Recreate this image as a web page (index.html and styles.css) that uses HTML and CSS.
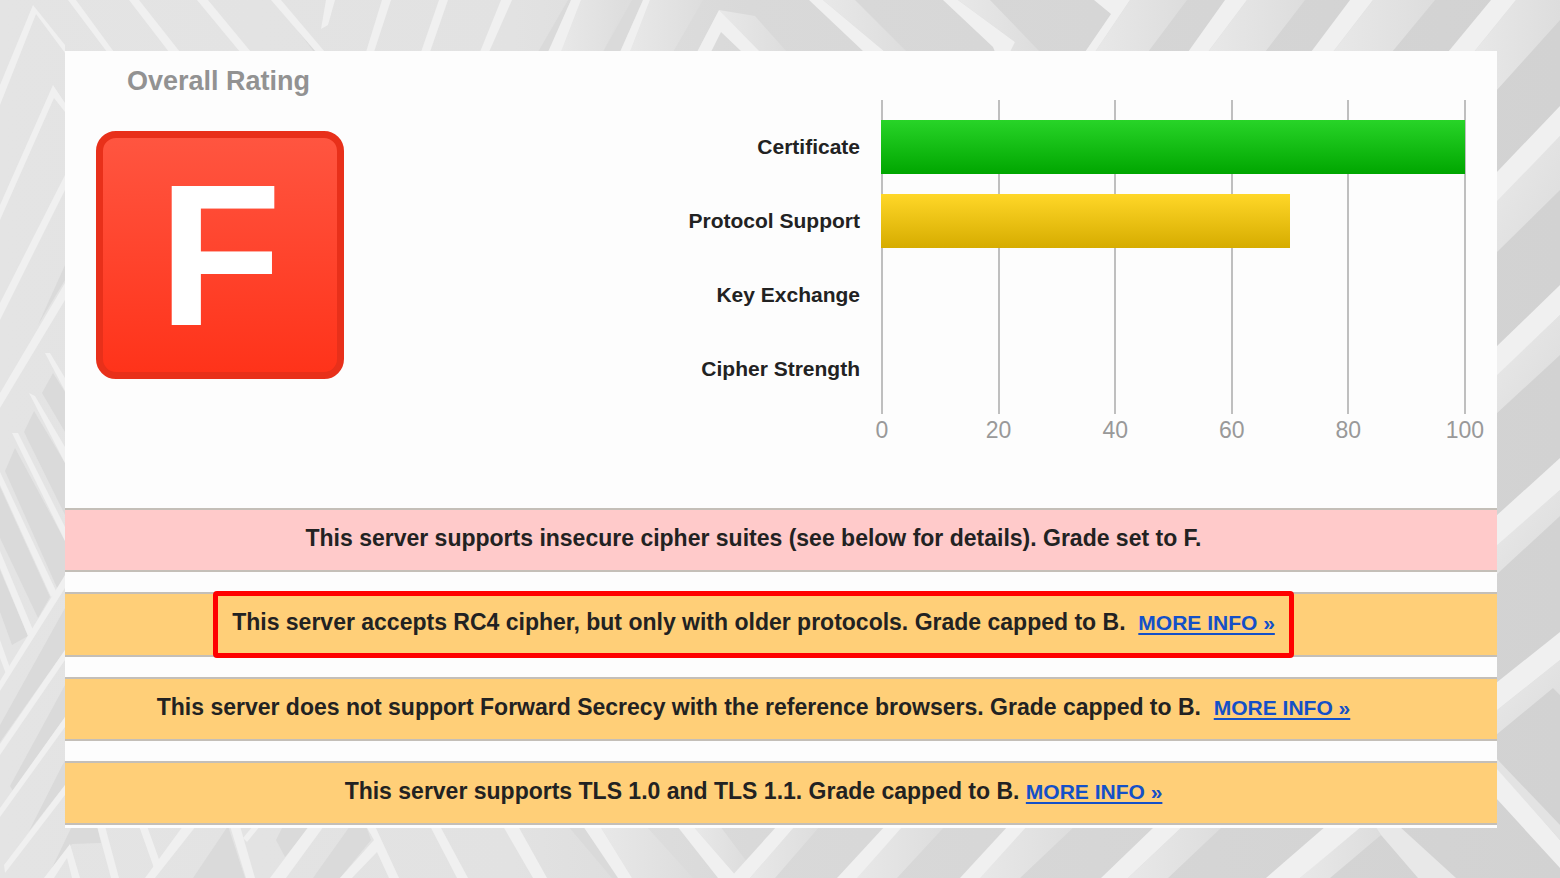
FILE: index.html
```
<!DOCTYPE html>
<html lang="en">
<head>
<meta charset="utf-8">
<title>Overall Rating</title>
<link rel="stylesheet" href="styles.css">
</head>
<body>
<svg class="backdrop" viewBox="0 0 1560 878" preserveAspectRatio="xMidYMid slice" aria-hidden="true">
  <defs>
    <linearGradient id="base" x1="0" x2="1" y1="0" y2="0">
      <stop offset="0" stop-color="#e4e4e4"/><stop offset=".33" stop-color="#e2e2e2"/><stop offset=".48" stop-color="#d9d9d9"/><stop offset="1" stop-color="#d2d2d2"/>
    </linearGradient>
    <linearGradient id="side" x1="0" x2="1" y1="0" y2="0">
      <stop offset="0" stop-color="#e8e8e8"/><stop offset="1" stop-color="#dddddd"/>
    </linearGradient>
    <linearGradient id="sideDown" x1="0" x2="1" y1="0" y2="1">
      <stop offset="0" stop-color="#e9e9e9"/><stop offset="1" stop-color="#dcdcdc"/>
    </linearGradient>
  </defs>
  <rect width="1560" height="878" fill="url(#base)"/>
  <!-- side faces of the beams -->
  <g fill="url(#side)">
    <path d="M581 0H628L603 52H561Z"/>
    <path d="M650 0H703L673 52H630Z"/>
    <path d="M719 10L755 16 787 52H755Z"/>
    <path d="M823 0H855L907 52H885Z"/>
    <path d="M958 0H990L1040 52H1009L1015 42Z"/>
    <path d="M1130 0H1187L1148 52H1095Z"/>
    <path d="M1247 0H1305L1265 52H1208Z"/>
    <path d="M1373 0H1435L1392 52H1333Z"/>
    <path d="M1516 0H1560V20L1496 91V52H1474Z"/>
    <path d="M600 826H646L693 878H632Z"/>
    <path d="M693 826H720L747 862 738 878Z"/>
    <path d="M795 826H820L775 878H750Z"/>
    <path d="M903 826H945L897 878H855Z"/>
    <path d="M1025 826H1075L1020 878H977Z"/>
    <path d="M1183 826H1223L1168 878H1128Z"/>
    <path d="M1360 826H1375L1381 835 1330 878H1300Z"/>
  </g>
  <g fill="url(#sideDown)">
    <path d="M1560 136V190L1496 253V200Z"/>
    <path d="M1560 315V355L1496 414V375Z"/>
    <path d="M1560 490V516L1496 575V545Z"/>
    <path d="M1560 660V695L1553 688 1496 735V711Z"/>
  </g>
  <!-- recesses between the beams -->
  <g fill="#dadada">
    <path d="M568 0L538 52H549L571 0Z"/>
    <path d="M632 0H643L620 52H603Z"/>
    <path d="M275 0H279L320 52H314Z"/>
    <path d="M568 826H583L620 878H612Z"/>
    <path d="M65 265V280L38 325Z"/>
    <path d="M53 373L42 393 65 432V392Z"/>
    <path d="M34 411L24 432 65 515V463Z"/>
    <path d="M15 448L5 471 58 590 65 575V541Z"/>
    <path d="M0 487V538L38 618 50 597Z"/>
    <path d="M0 570V612L12 645 28 636Z"/>
    <path d="M65 608V650L0 742V725Z"/>
    <path d="M65 685V717L13 791 10 786Z"/>
    <path d="M65 760V785L29 831Z"/>
    <path d="M72 826H97L101 843 72 844 52 868Z"/>
    <path d="M228 826L245 878H193Z"/>
    <path d="M283 826L276 840 285 857 310 826Z"/>
    <path d="M350 826H366L371 840 340 878H313Z"/>
  </g>
  <!-- lit top edges -->
  <g fill="#f0f0f0">
    <path d="M33 5L65 45V53L36 14 0 105V85Z"/>
    <path d="M53 85L65 103V112L54 98 0 220V205Z"/>
    <path d="M65 175V190L0 320V303Z"/>
    <path d="M65 283V300L0 408V393Z"/>
    <path d="M68 0H76L114 52H107Z"/>
    <path d="M129 0H139L180 52H169Z"/>
    <path d="M197 0H208L251 52H240Z"/>
    <path d="M271 0H281L325 52H316Z"/>
    <path d="M326 0H335L328 25 321 29Z"/>
    <path d="M382 0H391L374 52H366Z"/>
    <path d="M439 0H448L430 52H421Z"/>
    <path d="M501 0H512L489 52H480Z"/>
    <path d="M571 0H581L561 52H548Z"/>
    <path d="M643 0H650L630 52H620Z"/>
    <path d="M719 10L760 52H742L721 32 711 52H697Z"/>
    <path d="M809 0H823L885 52H864Z"/>
    <path d="M943 0H958L1015 42 1010 52H995L993 47Z"/>
    <path d="M1094 0H1130L1095 52H1085L1111 14Z"/>
    <path d="M1225 0H1247L1208 52H1188Z"/>
    <path d="M1350 0H1373L1333 52H1311Z"/>
    <path d="M1491 0H1516L1474 52H1448Z"/>
    <path d="M1560 106V136L1496 202V173Z"/>
    <path d="M1560 285V315L1496 376V347Z"/>
    <path d="M1560 458V490L1496 546V516Z"/>
    <path d="M1560 632V660L1496 711V683Z"/>
    <path d="M1496 766L1560 840V868L1496 798Z"/>
    <path d="M45 353H50L65 378V391Z"/>
    <path d="M29 393L35 396 65 447V463Z"/>
    <path d="M12 433H18L65 527V541Z"/>
    <path d="M0 472L57 593 51 597 0 485Z"/>
    <path d="M0 551L33 630 28 636 0 568Z"/>
    <path d="M0 640L10 668 6 674 0 658Z"/>
    <path d="M65 575V588L0 691V681Z"/>
    <path d="M65 650V660L0 755V744Z"/>
    <path d="M65 717V727L0 817V808Z"/>
    <path d="M65 785V795L5 873 4 865Z"/>
    <path d="M97 826H105L119 878H111Z"/>
    <path d="M139 826H147L160 862 154 868Z"/>
    <path d="M183 826H196L155 878H145Z"/>
    <path d="M70 844L80 878H72L67 858 54 878H44Z"/>
    <path d="M230 826H240L255 878H246Z"/>
    <path d="M253 826H260L247 842 243 838Z"/>
    <path d="M309 826H324L286 878H270Z"/>
    <path d="M374 840L366 826H375L399 878H389L377 852 352 878H340Z"/>
    <path d="M430 826H440L468 878H457Z"/>
    <path d="M503 826H518L547 878H533Z"/>
    <path d="M583 826H600L632 878H618Z"/>
    <path d="M677 826H693L738 878H718Z"/>
    <path d="M777 826H795L750 878H730Z"/>
    <path d="M885 826H903L857 878H837Z"/>
    <path d="M1008 826H1027L980 878H960Z"/>
    <path d="M1155 826H1183L1128 878H1101Z"/>
    <path d="M1326 826H1362L1300 878H1266Z"/>
  </g>
  <path fill="#e8e8e8" d="M1375 826H1399L1456 878H1418L1381 835Z"/>
  <path fill="#e3e3e3" d="M1496 758L1560 825V840L1496 768Z"/>
</svg>

<main class="report">
  <section class="summary">
    <div class="rating">
      <h1 class="rating-title">Overall Rating</h1>
      <div class="grade">F</div>
    </div>
    <div class="chart">
      <ul class="chart-labels">
        <li>Certificate</li>
        <li>Protocol Support</li>
        <li>Key Exchange</li>
        <li>Cipher Strength</li>
      </ul>
      <div class="plot">
        <div class="ticks">
          <span class="tick">0</span>
          <span class="tick">20</span>
          <span class="tick">40</span>
          <span class="tick">60</span>
          <span class="tick">80</span>
          <span class="tick">100</span>
        </div>
        <div class="bars">
          <div class="bar bar-green" style="width:100%"></div>
          <div class="bar bar-yellow" style="width:70%"></div>
        </div>
      </div>
    </div>
  </section>
  <section class="alerts">
    <p class="alert alert-error"><span class="message">This server supports insecure cipher suites (see below for details). Grade set to F.</span></p>
    <p class="alert"><span class="message highlight">This server accepts RC4 cipher, but only with older protocols. Grade capped to B.&nbsp; <a class="more" href="#rc4">MORE INFO »</a></span></p>
    <p class="alert"><span class="message">This server does not support Forward Secrecy with the reference browsers. Grade capped to B.&nbsp; <a class="more" href="#forward-secrecy">MORE INFO »</a></span></p>
    <p class="alert"><span class="message">This server supports TLS 1.0 and TLS 1.1. Grade capped to B. <a class="more" href="#tls">MORE INFO »</a></span></p>
  </section>
</main>
</body>
</html>
```
FILE: styles.css
```
* { box-sizing: border-box; }

body {
  margin: 0;
  padding: 51px 63px 51px 65px;
  background: #dcdcdc;
  font-family: "Liberation Sans", Arial, sans-serif;
  font-weight: bold;
  color: #222;
}

.backdrop {
  position: fixed;
  inset: 0;
  z-index: -1;
  width: 100%;
  height: 100%;
}

.report {
  background: #fdfdfd;
  padding-bottom: 3px;
}

.summary {
  display: flex;
  justify-content: space-between;
  padding: 14px 31px 62px;
}

.rating-title {
  margin: 0 0 34px 31px;
  font-size: 27px;
  line-height: 32px;
  color: #929292;
}

.grade {
  display: flex;
  align-items: center;
  justify-content: center;
  width: 248px;
  height: 248px;
  border: 7px solid #e8301a;
  border-radius: 20px;
  background: linear-gradient(#ff5540, #ff331a);
  color: #fff;
  font-size: 202px;
  line-height: 230px;
}

.chart {
  display: flex;
  flex: 0 1 780px;
  gap: 21px;
  padding-top: 35px;
}

.chart-labels {
  display: flex;
  flex: 1;
  flex-direction: column;
  gap: 20px;
  margin: 0;
  padding: 20px 0 0;
  list-style: none;
  text-align: right;
  font-size: 21px;
  line-height: 54px;
  white-space: nowrap;
}

.plot {
  display: grid;
  flex: 0 0 75%;
}

.ticks,
.bars {
  grid-area: 1 / 1;
}

.ticks {
  display: flex;
  justify-content: space-between;
}

.tick {
  display: flex;
  flex-direction: column;
  align-items: center;
  width: 2px;
  font-size: 23px;
  font-weight: normal;
  line-height: 32px;
  color: #999;
}

.tick::before {
  content: "";
  width: 2px;
  height: 314px;
  background: #bfbfbf;
}

.bars {
  display: flex;
  flex-direction: column;
  gap: 20px;
  padding: 20px 1px 0 0;
}

.bar { height: 54px; }
.bar-green { background: linear-gradient(#28d428, #00a600); }
.bar-yellow { background: linear-gradient(#ffd728, #d6ac00); }

.alerts {
  display: flex;
  flex-direction: column;
  gap: 20px;
}

.alert {
  display: flex;
  align-items: center;
  justify-content: center;
  min-height: 64px;
  margin: 0;
  padding-right: 55px;
  border: solid #c4bfb8;
  border-width: 2px 0;
  background: #ffcf78;
  font-size: 23px;
  line-height: 28px;
}

.alert-error { background: #ffcaca; }

.message { padding: 12px 0 16px; }

.highlight {
  margin: -3px 0;
  padding: 12px 14px 16px;
  border: 5px solid #f00;
  border-radius: 4px;
}

.more {
  color: #1450c8;
  font-size: 21px;
  text-decoration-thickness: 2px;
  text-underline-offset: 3px;
}
```
